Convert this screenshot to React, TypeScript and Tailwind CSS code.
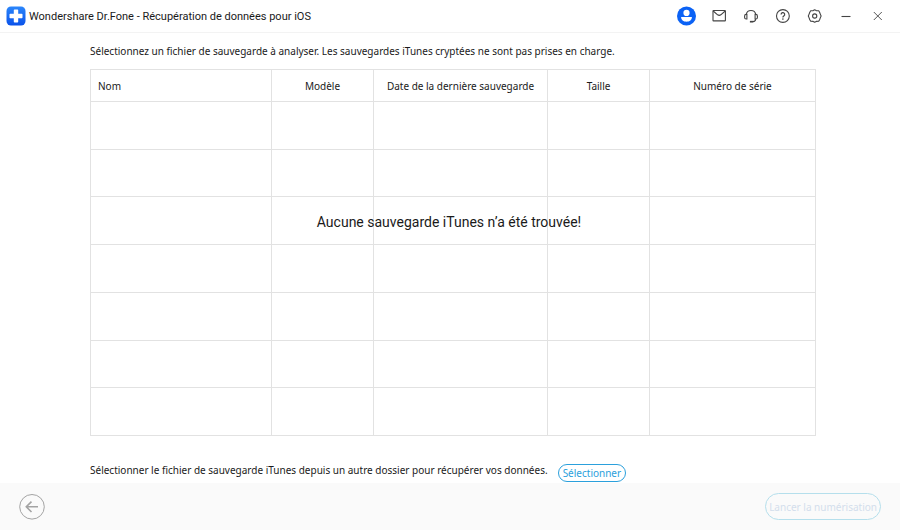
import { clsx } from "clsx";
import type { ReactNode } from "react";

const columns = [
  { title: "Nom", className: "w-[181px] text-left pl-[7px]" },
  { title: "Modèle", className: "w-[102px] text-center" },
  { title: "Date de la dernière sauvegarde", className: "w-[174px] text-center" },
  { title: "Taille", className: "w-[102px] text-center" },
  { title: "Numéro de série", className: "w-[166px] text-center" },
];

const emptyRows = [1, 2, 3, 4, 5, 6, 7];

function IconButton({ label, children }: { label: string; children: ReactNode }) {
  return (
    <button
      type="button"
      aria-label={label}
      className="flex size-5 items-center justify-center text-[#444444] hover:text-black"
    >
      {children}
    </button>
  );
}

function Logo() {
  return (
    <svg viewBox="0 0 20 20" className="size-5 shrink-0" aria-hidden="true">
      <defs>
        <linearGradient id="logo-fill" x1="0" y1="0" x2="0" y2="1">
          <stop offset="0" stopColor="#2b86fb" />
          <stop offset="1" stopColor="#0a52ea" />
        </linearGradient>
      </defs>
      <rect x="0.5" y="0.5" width="19" height="19" rx="4.5" fill="url(#logo-fill)" />
      <path
        d="M8.5 3.5h3a.7.7 0 0 1 .7.7v3.6h3.6a.7.7 0 0 1 .7.7v3a.7.7 0 0 1-.7.7h-3.6v3.6a.7.7 0 0 1-.7.7h-3a.7.7 0 0 1-.7-.7v-3.6H4.2a.7.7 0 0 1-.7-.7v-3a.7.7 0 0 1 .7-.7h3.6V4.2a.7.7 0 0 1 .7-.7z"
        fill="#fff"
      />
    </svg>
  );
}

function TitleBar() {
  return (
    <header className="flex h-[33px] shrink-0 items-center justify-between border-b border-[#f3f3f3] pr-3 pl-[6px]">
      <div className="flex items-center gap-[3px]">
        <Logo />
        <h1 className="pt-px font-['Roboto','Noto_Sans',sans-serif] text-[11px] leading-4">
          Wondershare Dr.Fone - Récupération de données pour iOS
        </h1>
      </div>
      <div className="flex items-center gap-3">
        <IconButton label="Compte">
          <svg viewBox="0 0 20 20" className="size-5">
            <circle cx="10.5" cy="10" r="9.5" fill="#0b62f5" />
            <circle cx="10.5" cy="6.9" r="3.1" fill="#fff" />
            <path d="M5.1 11.1h10.8c0 3-2.3 4.7-5.4 4.7s-5.4-1.7-5.4-4.7z" fill="#fff" />
          </svg>
        </IconButton>
        <IconButton label="Messages">
          <svg viewBox="0 0 20 20" className="size-5" fill="none" stroke="currentColor" strokeWidth="1.1">
            <rect x="5" y="4.5" width="12.4" height="10.4" rx="0.5" />
            <path d="M5.2 5 9.6 8.8q1.6 1.2 3.2 0L17.2 5" />
          </svg>
        </IconButton>
        <IconButton label="Assistance">
          <svg viewBox="0 0 20 20" className="size-5" fill="none" stroke="currentColor" strokeWidth="1.1">
            <path d="M6.2 8.4a4.9 4.9 0 0 1 9.6 0" />
            <path d="M6.9 8.4v4.6h-.7a1.6 1.6 0 0 1-1.6-1.6V10a1.6 1.6 0 0 1 1.6-1.6z" />
            <path d="M15.1 8.4v4.6h.7a1.6 1.6 0 0 0 1.6-1.6V10a1.6 1.6 0 0 0-1.6-1.6z" />
            <path d="M15.6 13c0 1.7-1 2.6-2.6 2.6" />
            <path d="M9.9 15.7h3.2" strokeWidth="1.7" />
          </svg>
        </IconButton>
        <IconButton label="Aide">
          <svg viewBox="0 0 20 20" className="size-5" fill="none" stroke="currentColor" strokeWidth="1.1">
            <circle cx="10.9" cy="10" r="6.4" />
            <path d="M9.1 8.5a1.8 1.8 0 1 1 2.7 1.5c-.6.4-.9.7-.9 1.4" strokeWidth="1.2" />
            <circle cx="10.9" cy="13.1" r="0.8" fill="currentColor" stroke="none" />
          </svg>
        </IconButton>
        <IconButton label="Paramètres">
          <svg
            viewBox="0 0 20 20"
            className="size-5"
            fill="none"
            stroke="currentColor"
            strokeWidth="1.1"
            strokeLinejoin="round"
          >
            <path d="M9.2 4.6 10.7 3.8l1.5.8 2.5.2.9 1.5.7 1.8.8 1.9-.8 1.9-.7 1.8-.9 1.5-2.5.2-1.5.8-1.5-.8-2.5-.2-.9-1.5-.7-1.8-.8-1.9.8-1.9.7-1.8.9-1.5z" />
            <circle cx="10.7" cy="10" r="2.1" />
          </svg>
        </IconButton>
        <IconButton label="Réduire">
          <svg viewBox="0 0 20 20" className="size-5" fill="none" stroke="currentColor" strokeWidth="1.1">
            <path d="M5.5 10.5h9" />
          </svg>
        </IconButton>
        <IconButton label="Fermer">
          <svg viewBox="0 0 20 20" className="size-5" fill="none" stroke="currentColor" strokeWidth="0.9">
            <path d="m5.8 6 8 8M13.8 6l-8 8" />
          </svg>
        </IconButton>
      </div>
    </header>
  );
}

function BackupTable() {
  return (
    <div className="relative mt-[10px] min-h-0 flex-1">
      <table className="h-full w-full table-fixed border-collapse border border-[#e2e2e2] text-[10px] leading-4">
        <thead>
          <tr className="h-8">
            {columns.map((column) => (
              <th
                key={column.title}
                scope="col"
                className={clsx("border border-[#e2e2e2] p-0 pt-px font-normal", column.className)}
              >
                {column.title}
              </th>
            ))}
          </tr>
        </thead>
        <tbody>
          {emptyRows.map((row) => (
            <tr key={row}>
              {columns.map((column) => (
                <td key={column.title} className="border border-[#e2e2e2] p-0" />
              ))}
            </tr>
          ))}
        </tbody>
      </table>
      <p className="absolute inset-x-0 top-[143px] pr-2 text-center font-['Roboto','Noto_Sans',sans-serif] text-[14px] leading-5">
        Aucune sauvegarde iTunes n’a été trouvée!
      </p>
    </div>
  );
}

export default function App() {
  return (
    <div className="flex h-screen flex-col bg-white font-['Noto_Sans','Open_Sans',sans-serif] text-[#1a1a1a]">
      <TitleBar />
      <main className="flex min-h-0 flex-1 flex-col pr-[84px] pl-[90px]">
        <p className="mt-[10px] text-[10px] leading-4">
          Sélectionnez un fichier de sauvegarde à analyser. Les sauvegardes iTunes cryptées ne sont pas
          prises en charge.
        </p>
        <BackupTable />
        <div className="mt-[26px] mb-px flex items-end gap-[10px]">
          <p className="mb-1 text-[10px] leading-4">
            Sélectionner le fichier de sauvegarde iTunes depuis un autre dossier pour récupérer vos
            données.
          </p>
          <button
            type="button"
            className="flex h-[18px] items-center rounded-full border border-[#2ba0dc] px-1 text-[10px] leading-4 text-[#2ba0dc] hover:bg-sky-50"
          >
            Sélectionner
          </button>
        </div>
      </main>
      <footer className="flex h-[47px] shrink-0 items-center justify-between bg-[#fafafa] pr-[19px] pl-[19px]">
        <button type="button" aria-label="Retour" className="text-[#a3a3a3] hover:text-gray-600">
          <svg viewBox="0 0 26 26" className="size-[26px]" fill="none" stroke="currentColor">
            <circle cx="13" cy="12.8" r="12.3" />
            <path d="M19 12.8H7.5M12.5 7.6 7.3 12.8l5.2 5.2" strokeWidth="1.6" />
          </svg>
        </button>
        <button
          type="button"
          disabled
          className="flex h-[27px] items-center rounded-full border border-[#b5dfec] px-[3px] text-[10px] leading-4 text-[#d3deec]"
        >
          Lancer la numérisation
        </button>
      </footer>
    </div>
  );
}
